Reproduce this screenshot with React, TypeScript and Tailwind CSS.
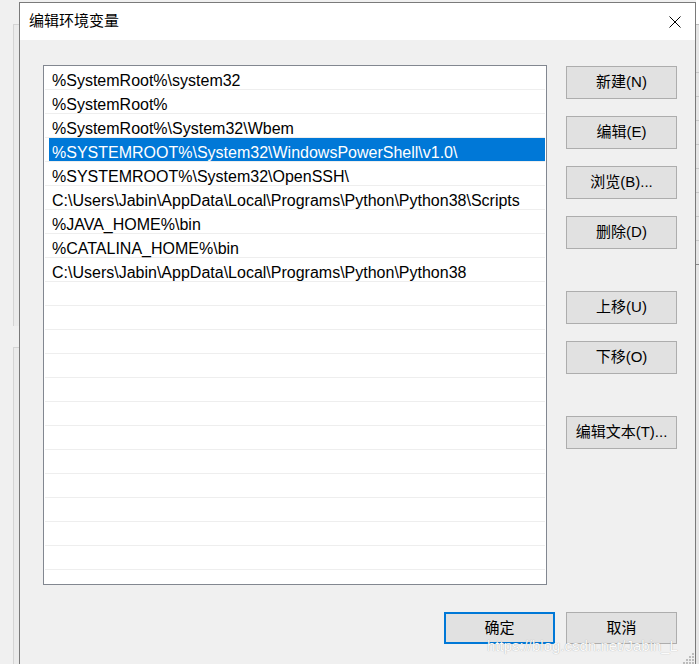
import React from "react";

const rows = [
  "%SystemRoot%\\system32",
  "%SystemRoot%",
  "%SystemRoot%\\System32\\Wbem",
  "%SYSTEMROOT%\\System32\\WindowsPowerShell\\v1.0\\",
  "%SYSTEMROOT%\\System32\\OpenSSH\\",
  "C:\\Users\\Jabin\\AppData\\Local\\Programs\\Python\\Python38\\Scripts",
  "%JAVA_HOME%\\bin",
  "%CATALINA_HOME%\\bin",
  "C:\\Users\\Jabin\\AppData\\Local\\Programs\\Python\\Python38",
];

const FONT = '"Liberation Sans", "Noto Sans CJK SC", sans-serif';

function Btn({ label, className = "" }: { label: string; className?: string }) {
  return (
    <div
      className={`w-[111px] h-[33px] bg-[#e1e1e1] border border-[#adadad] flex items-center justify-center text-[15px] text-black ${className}`}
    >
      {label}
    </div>
  );
}

export default function App() {
  const all = [...rows, ...Array(13).fill("")];
  return (
    <div
      className="w-[699px] h-[664px] bg-[#f0f0f0] flex overflow-hidden relative"
      style={{ fontFamily: FONT }}
    >
      {/* background window at left */}
      <div className="w-[19px] shrink-0 flex flex-col">
        <div className="h-[24px]" />
        <div className="h-[302px] ml-[13px] border-l border-t border-[#d4d4d4] bg-[#ebebeb]" />
        <div className="h-[21px]" />
        <div className="flex-1 ml-[13px] border-l border-t border-[#d4d4d4] bg-[#ebebeb]" />
      </div>

      {/* dialog */}
      <div className="w-[677px] shrink-0 h-[700px] mt-[2px] border border-[#7a7a7a] flex flex-col bg-[#f0f0f0]">
        <div className="h-[37px] bg-white flex items-center justify-between pl-[9px] pr-[14px]">
          <span className="text-[15px] text-black">编辑环境变量</span>
          <svg width="12" height="12" viewBox="0 0 12 12" className="mt-[1px]">
            <path d="M0.5 0.5 L11.5 11.5 M11.5 0.5 L0.5 11.5" stroke="#000" strokeWidth="1" />
          </svg>
        </div>
        <div className="flex flex-col pt-[25px] pl-[23px] pr-[18px]">
          <div className="flex">
            <div className="w-[504px] h-[520px] border border-[#828790] bg-white overflow-hidden">
              {all.map((t, i) => (
                <div key={i} className="h-[24px] mx-[1px] border-b border-[#eeeeee]">
                  <div
                    className={`h-[23px] ml-[4px] pl-[3px] text-[16px] leading-[29px] whitespace-nowrap ${
                      i === 3 ? "bg-[#0078d7] text-white" : "text-black"
                    }`}
                  >
                    {t}
                  </div>
                </div>
              ))}
            </div>
            <div className="ml-[19px] mt-[1px] flex flex-col">
              <Btn label="新建(N)" />
              <Btn label="编辑(E)" className="mt-[17px]" />
              <Btn label="浏览(B)..." className="mt-[17px]" />
              <Btn label="删除(D)" className="mt-[17px]" />
              <Btn label="上移(U)" className="mt-[42px]" />
              <Btn label="下移(O)" className="mt-[17px]" />
              <Btn label="编辑文本(T)..." className="mt-[42px]" />
            </div>
          </div>
          <div className="flex justify-end gap-[11px] mt-[27px]">
            <div className="w-[111px] h-[32px] bg-[#e1e1e1] border-2 border-[#0078d7] flex items-center justify-center text-[15px] text-black">
              确定
            </div>
            <div className="w-[111px] h-[32px] bg-[#e1e1e1] border border-[#adadad] flex items-center justify-center text-[15px] text-black">
              取消
            </div>
          </div>
        </div>
      </div>

      {/* background window at right */}
      <div className="flex-1 flex flex-col bg-[#e6e6e6]">
        <div className="h-[24px] bg-white" />
        <div className="h-[48px] border-t border-[#bdbdbd]" />
        <div className="h-[24px] border-t border-[#c8c8c8]" />
        <div className="h-[24px] border-t border-[#c8c8c8]" />
        <div className="h-[24px] border-t border-[#c8c8c8]" />
        <div className="h-[24px] border-t border-[#c8c8c8]" />
        <div className="h-[24px] border-t border-[#c8c8c8]" />
        <div className="h-[24px] border-t border-[#c8c8c8]" />
        <div className="h-[24px] border-t border-[#c8c8c8]" />
        <div className="h-[24px] border-t border-[#c8c8c8]" />
        <div className="flex-1 border-t border-[#8a8a8a]" />
      </div>

      {/* size grip */}
      <svg width="12" height="12" viewBox="0 0 12 12" className="absolute left-[683px] top-[652px]">
        <rect x="9" y="1" width="2" height="2" fill="#bcbcbc" />
        <rect x="6" y="4" width="2" height="2" fill="#bcbcbc" />
        <rect x="9" y="4" width="2" height="2" fill="#bcbcbc" />
        <rect x="3" y="7" width="2" height="2" fill="#bcbcbc" />
        <rect x="6" y="7" width="2" height="2" fill="#bcbcbc" />
        <rect x="9" y="7" width="2" height="2" fill="#bcbcbc" />
        <rect x="0" y="10" width="2" height="2" fill="#bcbcbc" />
        <rect x="3" y="10" width="2" height="2" fill="#bcbcbc" />
        <rect x="6" y="10" width="2" height="2" fill="#bcbcbc" />
        <rect x="9" y="10" width="2" height="2" fill="#bcbcbc" />
      </svg>

      {/* watermark */}
      <div className="absolute left-[487px] top-[638px] text-[15px] leading-[15px] text-[#fbfbfb] whitespace-nowrap [text-shadow:0_0_1px_rgba(0,0,0,0.35)]">
        https://blog.csdn.net/Jabin_L
      </div>
    </div>
  );
}
